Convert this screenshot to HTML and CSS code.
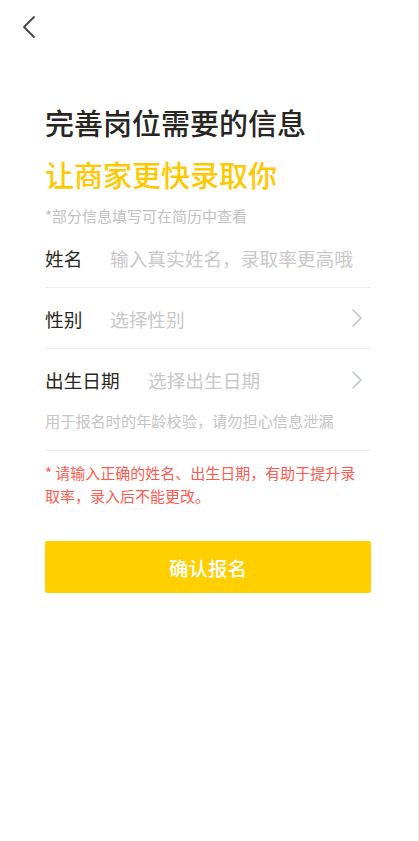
FILE: index.html
```html
<!DOCTYPE html>
<html lang="zh-CN">
<head>
<meta charset="utf-8">
<link rel="stylesheet" href="styles.css">
</head>
<body>
<div class="page">
  <header class="nav">
    <svg class="back" width="16" height="24" viewBox="0 0 16 24"><path d="M13 2 L3 12 L13 22" fill="none" stroke="#444" stroke-width="1.8" stroke-linecap="round" stroke-linejoin="round"/></svg>
  </header>
  <main class="content">
    <h1 class="title">完善岗位需要的信息</h1>
    <h2 class="subtitle">让商家更快录取你</h2>
    <p class="hint">*部分信息填写可在简历中查看</p>
    <div class="row">
      <span class="label">姓名</span>
      <span class="ph">输入真实姓名，录取率更高哦</span>
    </div>
    <div class="row">
      <span class="label">性别</span>
      <span class="ph">选择性别</span>
      <svg class="arrow" width="12" height="20" viewBox="0 0 12 20"><path d="M2 2 L10 10 L2 18" fill="none" stroke="#bcc4cf" stroke-width="1.6" stroke-linecap="round" stroke-linejoin="round"/></svg>
    </div>
    <div class="row row-date">
      <span class="label">出生日期</span>
      <span class="ph">选择出生日期</span>
      <svg class="arrow" width="12" height="20" viewBox="0 0 12 20"><path d="M2 2 L10 10 L2 18" fill="none" stroke="#bcc4cf" stroke-width="1.6" stroke-linecap="round" stroke-linejoin="round"/></svg>
    </div>
    <p class="note">用于报名时的年龄校验，请勿担心信息泄漏</p>
    <p class="warn">* 请输入正确的姓名、出生日期，有助于提升录取率，录入后不能更改。</p>
    <button class="submit">确认报名</button>
  </main>
</div>
</body>
</html>
```
FILE: styles.css
```css
* { box-sizing: border-box; margin: 0; padding: 0; }
html, body { background: #fff; }
body {
  font-family: "Noto Sans CJK SC", "Noto Sans", sans-serif;
  width: 419px;
  height: 841px;
  overflow: hidden;
}
.page {
  width: 419px;
  height: 841px;
  border-right: 1px solid #e6e6e6;
}
.nav {
  height: 100px;
  padding: 15px 0 0 21px;
}
.back { display: block; }
.content {
  padding: 0 47px 0 45px;
}
.title {
  font-size: 29px;
  font-weight: 500;
  color: #28261f;
  line-height: 48px;
  margin-top: -2px;
}
.subtitle {
  margin-top: 4px;
  font-size: 29px;
  font-weight: 500;
  color: #ffc800;
  line-height: 48px;
}
.hint {
  margin-top: 6px;
  font-size: 15px;
  color: #c2c2c2;
  line-height: 24px;
}
.row {
  display: flex;
  align-items: center;
  height: 61px;
  border-bottom: 1px solid #eeeeee;
}
.row:first-of-type { margin-top: -1px; }
.label {
  font-size: 18.7px;
  color: #2b2820;
  width: 65px;
  flex: none;
}
.row-date .label { width: 103px; }
.ph {
  font-size: 18.7px;
  color: #c8c8c8;
  flex: 1;
  white-space: nowrap;
}
.arrow { flex: none; margin-right: 8px; }
.row-date { border-bottom: none; }
.note {
  margin-top: -1px;
  font-size: 15.2px;
  color: #c4c4c4;
  line-height: 22px;
  padding-bottom: 19px;
  border-bottom: 1px solid #eeeeee;
}
.warn {
  margin-top: 10px;
  padding-right: 8px;
  font-size: 15px;
  color: #ff5a4e;
  line-height: 23px;
}
.submit {
  display: block;
  width: 100%;
  height: 52px;
  margin-top: 34px;
  border: none;
  border-radius: 2px;
  background: #ffcf00;
  color: #fff;
  font-family: "Noto Sans CJK SC", sans-serif;
  font-size: 19.5px;
  font-weight: 500;
}
```
